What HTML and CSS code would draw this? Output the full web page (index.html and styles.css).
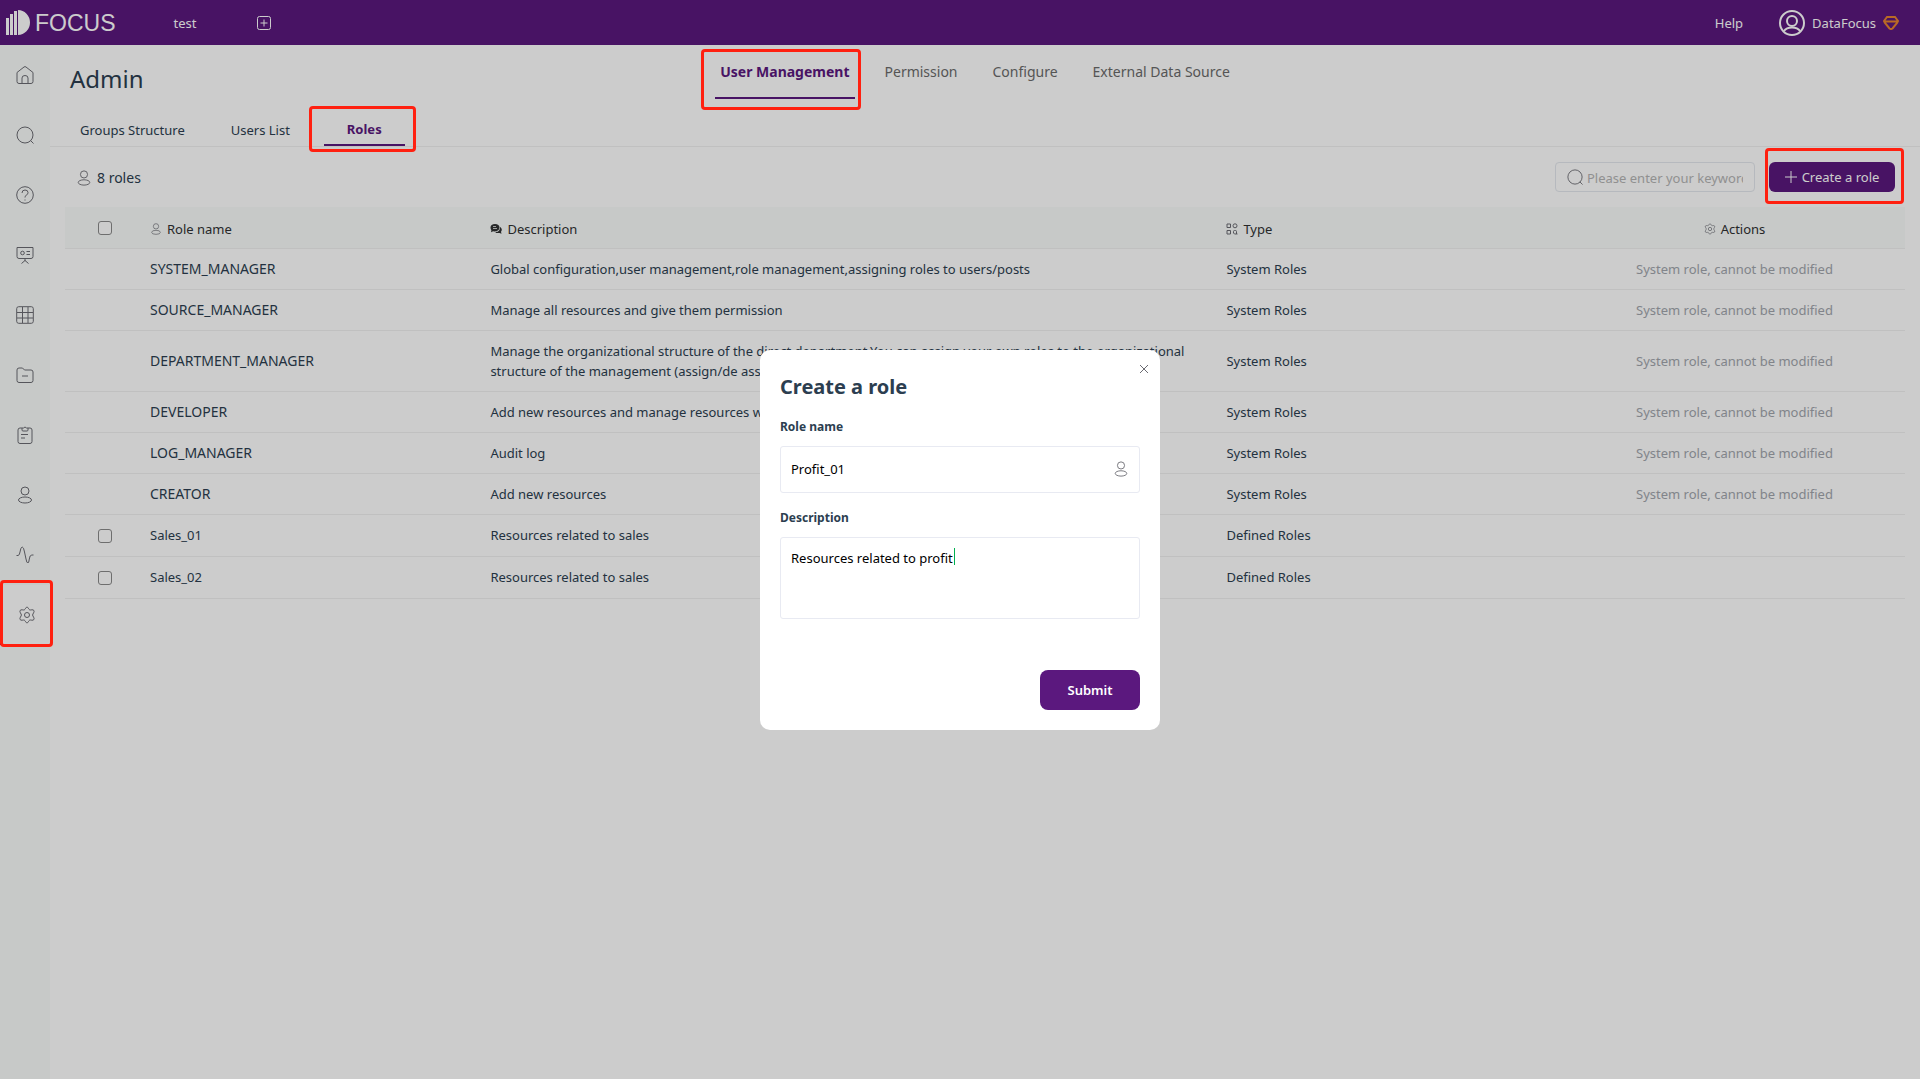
FILE: index.html
```html
<!DOCTYPE html>
<html lang="en">
<head>
<meta charset="utf-8">
<title>Admin - Roles</title>
<link rel="stylesheet" href="styles.css">
</head>
<body>
<svg class="sprite" aria-hidden="true">
  <symbol id="i-user" viewBox="0 0 18 18"><circle cx="9" cy="5" r="4"/><ellipse cx="9" cy="14" rx="6.500" ry="3"/></symbol>
  <symbol id="i-search" viewBox="0 0 18 18"><circle cx="9" cy="9" r="8"/><path d="M14.500 14.500l3 3"/></symbol>
  <symbol id="i-gear" viewBox="0 0 18 18"><path d="M9 1C10 1 10.700 3.400 11.700 3.900S15 3 15.900 4.500 14.600 7.800 14.600 9s2.200 3 1.300 4.500-3.200.1-4.200.6S10 17 9 17s-1.700-2.400-2.700-2.900S3 15 2.100 13.500 3.400 10.200 3.400 9 1.200 6 2.100 4.500s3.200-.1 4.200-.6S8 1 9 1z"/><circle cx="9" cy="9" r="2.500"/></symbol>
</svg>
<header class="topbar">
  <a class="logo" href="#" aria-label="Focus home">
    <svg width="24" height="26" viewBox="0 0 24 26"><path d="M0 8h3v17H0zM4 4h3v21H4zM8 1h3v24H8zM12 0a12 12.500 0 0 1 0 25z"/></svg>
    <span>FOCUS</span>
  </a>
  <a class="project" href="#">test</a>
  <button class="add" aria-label="Add project"><svg class="ico" width="14" height="14" viewBox="0 0 14 14"><rect x=".5" y=".5" width="13" height="13" rx="2"/><path d="M7 3.500v7M3.500 7h7"/></svg></button>
  <a class="help" href="#">Help</a>
  <a class="account" href="#">
    <svg class="ico avatar" width="26" height="26" viewBox="0 0 26 26"><circle cx="13" cy="13" r="12"/><circle cx="13" cy="11" r="5"/><path d="M5 21c2-3 5-3.500 8-3.500s6 .5 8 3.500"/></svg>
    <span>DataFocus</span>
    <svg class="ico gem" width="16" height="14" viewBox="0 0 16 14"><path d="M4 1h8l3 4-1 2-4.500 5.500q-1.500 1-3 0L2 7 1 5zM2 5.500h12"/></svg>
  </a>
</header>
<div class="shell">
  <nav class="side" aria-label="Main">
    <a href="#" aria-label="Home"><svg class="ico" width="18" height="18" viewBox="0 0 18 18"><path d="M1 6.500L8 1q1-.8 2 0l7 5.500v9q0 2-2 2H3q-2 0-2-2zM6 17v-5q0-2.500 3-2.500t3 2.500v5"/></svg></a>
    <a href="#" aria-label="Search"><svg class="ico" width="18" height="18"><use href="#i-search"/></svg></a>
    <a href="#" aria-label="Questions"><svg class="ico" width="18" height="18" viewBox="0 0 18 18"><circle cx="9" cy="9" r="8.300"/><path d="M6 7q0-3 3-3t3 2.500Q12 8 10.500 9 9 10 9 11.500M9 13.500v1"/></svg></a>
    <a href="#" aria-label="Boards"><svg class="ico" width="18" height="18" viewBox="0 0 18 18"><path d="M1 1.500h16v9q0 2-2 2H3q-2 0-2-2zM9 12.500V15M5.500 17.500L9 14.500l3.500 3M10.500 5.500H14M10.500 8.500H14"/><circle cx="6.500" cy="7" r="1.800"/></svg></a>
    <a href="#" aria-label="Tables"><svg class="ico" width="18" height="18" viewBox="0 0 18 18"><rect x=".7" y=".7" width="16.600" height="16.600" rx="2"/><path d="M1 6.500h16M1 12h16M6.500 1v16M12 1v16"/></svg></a>
    <a href="#" aria-label="Resources"><svg class="ico" width="18" height="18" viewBox="0 0 18 18"><path d="M1 4q0-2 2-2h3.500l2 2H15q2 0 2 2v8.500q0 2-2 2H3q-2 0-2-2zM6 10h6"/></svg></a>
    <a href="#" aria-label="Tasks"><svg class="ico" width="18" height="18" viewBox="0 0 18 18"><path d="M6 2H4Q2 2 2 4v11.500q0 2 2 2h10q2 0 2-2V4q0-2-2-2h-2M5 8.500h7M5 12h4"/><path d="M6 2h1.500q1.500-2 3 0H12v2q0 1-1 1H7q-1 0-1-1z"/></svg></a>
    <a href="#" aria-label="Users"><svg class="ico" width="18" height="18"><use href="#i-user"/></svg></a>
    <a href="#" aria-label="Monitor"><svg class="ico" width="18" height="18" viewBox="0 0 18 18"><path d="M.5 9.500H2Q3.500 9.500 4 6 4.700 1 6.200 1T8.500 6l1.500 7q.7 4 1.800 4t1.500-4q.4-4 2.500-4h1.700"/></svg></a>
    <a href="#" aria-label="Admin" aria-current="page" class="marked mark-side"><svg class="ico" width="18" height="18"><use href="#i-gear"/></svg></a>
  </nav>
  <main class="content">
    <div class="head">
      <h1>Admin</h1>
      <nav class="tabs" aria-label="Admin sections">
        <a href="#" aria-current="page" class="marked mark-tab">User Management</a>
        <a href="#">Permission</a>
        <a href="#">Configure</a>
        <a href="#">External Data Source</a>
      </nav>
    </div>
    <nav class="subtabs" aria-label="User management">
      <a href="#">Groups Structure</a>
      <a href="#">Users List</a>
      <a href="#" aria-current="page" class="marked mark-subtab">Roles</a>
    </nav>
    <div class="toolbar">
      <div class="count"><svg class="ico" width="16" height="16"><use href="#i-user"/></svg><span>8 roles</span></div>
      <label class="search"><svg class="ico" width="16" height="16"><use href="#i-search"/></svg><input type="text" aria-label="Keyword" placeholder="Please enter your keyword"></label>
      <button class="create marked mark-create"><svg class="ico" width="12" height="12" viewBox="0 0 12 12"><path d="M6 0v12M0 6h12"/></svg>Create a role</button>
    </div>
    <table class="roles">
      <colgroup><col class="c-check"><col class="c-name"><col class="c-desc"><col class="c-type"><col></colgroup>
      <thead>
        <tr>
          <th class="check"><input type="checkbox" aria-label="Select all roles"></th>
          <th><span class="th"><svg class="ico" width="12" height="12"><use href="#i-user"/></svg>Role name</span></th>
          <th><span class="th"><svg class="bubble" width="12" height="12" viewBox="0 0 12 12"><path fill-rule="evenodd" d="M5 1c2.800 0 4.500 1.400 4.500 3.600S7.800 8.500 5 8.500c-.7 0-1.300 0-1.900-.3L1 9.200l.4-2C.8 6.500.5 5.700.5 4.600.5 2.400 2.200 1 5 1zM3 3.200v.8h3v-.8zm0 2v.8h4v-.8z"/><path d="M10 4c1.200.6 1.800 1.500 1.800 2.800 0 .8-.3 1.500-.8 2l.5 2-2-.9C7.500 10.300 6 10 5.200 9.200 8 9.200 10.200 7.500 10 4z"/></svg>Description</span></th>
          <th><span class="th"><svg class="ico" width="12" height="12" viewBox="0 0 12 12"><path d="M1 1h3.500v3.500H1zM1 7.500h3.500V11H1z"/><circle cx="9" cy="2.800" r="2"/><path d="M7.500 10V8.500q0-1 1-1h1q1 0 1 1V11h-2zM10.500 11h1"/></svg>Type</span></th>
          <th class="act"><span class="th"><svg class="ico" width="12" height="12"><use href="#i-gear"/></svg>Actions</span></th>
        </tr>
      </thead>
      <tbody>
        <tr><td></td><td class="name">SYSTEM_MANAGER</td><td>Global configuration,user management,role management,assigning roles to users/posts</td><td>System Roles</td><td class="act">System role, cannot be modified</td></tr>
        <tr><td></td><td class="name">SOURCE_MANAGER</td><td>Manage all resources and give them permission</td><td>System Roles</td><td class="act">System role, cannot be modified</td></tr>
        <tr><td></td><td class="name">DEPARTMENT_MANAGER</td><td>Manage the organizational structure of the direct department.You can assign your own roles to the organizational structure of the management (assign/de assign)</td><td>System Roles</td><td class="act">System role, cannot be modified</td></tr>
        <tr><td></td><td class="name">DEVELOPER</td><td>Add new resources and manage resources with permission</td><td>System Roles</td><td class="act">System role, cannot be modified</td></tr>
        <tr><td></td><td class="name">LOG_MANAGER</td><td>Audit log</td><td>System Roles</td><td class="act">System role, cannot be modified</td></tr>
        <tr><td></td><td class="name">CREATOR</td><td>Add new resources</td><td>System Roles</td><td class="act">System role, cannot be modified</td></tr>
        <tr class="custom"><td class="check"><input type="checkbox" aria-label="Select Sales_01"></td><td>Sales_01</td><td>Resources related to sales</td><td>Defined Roles</td><td></td></tr>
        <tr class="custom"><td class="check"><input type="checkbox" aria-label="Select Sales_02"></td><td>Sales_02</td><td>Resources related to sales</td><td>Defined Roles</td><td></td></tr>
      </tbody>
    </table>
  </main>
</div>
<div class="overlay">
  <form class="modal" role="dialog" aria-modal="true" aria-labelledby="modal-title">
    <button type="button" class="close" aria-label="Close"><svg class="ico" width="8" height="8" viewBox="0 0 8 8"><path d="M0 0l8 8M8 0L0 8"/></svg></button>
    <h2 id="modal-title">Create a role</h2>
    <label for="role-name">Role name</label>
    <div class="field">
      <input id="role-name" type="text" value="Profit_01">
      <svg class="ico" width="16" height="16"><use href="#i-user"/></svg>
    </div>
    <label for="role-desc">Description</label>
    <div class="field area">
      <textarea id="role-desc">Resources related to profit</textarea>
      <span class="caret"></span>
    </div>
    <button type="submit" class="submit">Submit</button>
  </form>
</div>
</body>
</html>
```

FILE: styles.css
```css
* { box-sizing: border-box; }

body {
  margin: 0;
  min-height: 100vh;
  display: flex;
  flex-direction: column;
  background: #fff;
  color: #2c3e50;
  font: 13px/20px "Noto Sans", "Open Sans", sans-serif;
}

a { color: inherit; text-decoration: none; }
button, input, textarea { font: inherit; color: inherit; margin: 0; }
button { border: 0; background: none; padding: 0; }
h1, h2 { margin: 0; }

.sprite { position: absolute; width: 0; height: 0; }
.ico { fill: none; stroke: #6b6b72; stroke-width: 1; flex: none; }

/* Top bar */
.topbar {
  display: flex;
  align-items: center;
  height: 45px;
  padding: 0 21px 0 6px;
  background: #5b187e;
  color: #fff;
}
.topbar .ico { stroke: #fff; }
.logo { display: flex; align-items: center; gap: 5px; font: 23px/26px "Liberation Sans", sans-serif; }
.logo svg { fill: #fff; }
.project { margin-left: 58px; }
.add { margin-left: 61px; display: flex; }
.help { margin-left: auto; }
.account { margin-left: 36px; display: flex; align-items: center; gap: 7px; }
.avatar { stroke-width: 2; }
.topbar .gem { stroke: #e8842f; stroke-width: 2; }

/* Sidebar */
.shell { flex: 1; display: flex; }
.side { flex: none; width: 50px; background: #f9fcfb; }
.side a { display: flex; align-items: center; justify-content: center; height: 60px; }
.side a[aria-current] { background: #fff; border-left: 3px solid #5b187e; }

/* Section heading and tabs */
.content { flex: 1; min-width: 0; }
.head {
  display: grid;
  grid-template-columns: 1fr auto 1fr;
  height: 66px;
  padding: 0 40px 0 20px;
}
.head h1 { font-size: 24px; line-height: 32px; font-weight: 400; padding-top: 18px; }
.tabs { display: flex; align-self: start; gap: 25px; color: #6b6b6b; font-size: 14px; }
.tabs a { padding: 17px 5px 15px; border-bottom: 2px solid transparent; }
.tabs a[aria-current], .subtabs a[aria-current] { color: #5b187e; font-weight: 700; border-color: #5b187e; }

.subtabs { display: flex; height: 36px; padding: 0 7px; border-bottom: 1px solid #f0f0f0; }
.subtabs a { padding: 9px 23px 6px; border-bottom: 2px solid transparent; }
.subtabs a[aria-current] { margin-left: 11px; padding-top: 8px; }

/* Toolbar */
.toolbar { display: flex; align-items: center; height: 60px; padding: 0 25px 0 26px; }
.count { display: flex; align-items: center; gap: 5px; padding-top: 1px; font-size: 14px; }
.search {
  margin-left: auto;
  display: flex;
  align-items: center;
  gap: 4px;
  width: 200px;
  height: 30px;
  padding: 0 11px;
  border: 1px solid #e4e8ee;
  border-radius: 4px;
}
.search input { flex: 1; min-width: 0; padding: 1px 0 0; border: 0; outline: 0; background: none; }
.search input::placeholder { color: #b5b5b5; }
.create {
  display: flex;
  align-items: center;
  justify-content: center;
  gap: 5px;
  width: 126px;
  height: 30px;
  margin-left: 14px;
  border-radius: 6px;
  background: #5b187e;
  color: #fff;
}
.create .ico { stroke: #fff; }

/* Roles table */
.roles { width: calc(100% - 30px); margin: 0 15px; border-collapse: separate; border-spacing: 0; table-layout: fixed; }
.c-check { width: 75px; }
.c-name { width: 18.5%; }
.c-desc { width: 40%; }
.c-type { width: 19%; }
.roles th, .roles td { padding: 10px; border-bottom: 1px solid #f0f0f0; text-align: left; font-weight: 400; }
.roles th { background: #f9fcfb; color: #303133; padding: 12px 10px 9px; }
.roles .name { font-size: 14px; }
.roles .custom td { padding-bottom: 11px; }
.roles tr .check { padding: 1px 0 0 33px; }
.roles .custom .check { padding: 1px 0 0 33px; }
.roles .act { padding-right: 12px; text-align: center; color: #a2a6ad; }
.roles th.act { color: #303133; }
.roles input { appearance: none; display: block; width: 14px; height: 14px; border: 1px solid #8a8a8a; border-radius: 3px; background: #fff; }
.th { display: flex; align-items: center; gap: 5px; }
.act .th { justify-content: center; }
.bubble { fill: #303133; }

/* Dialog */
.overlay {
  position: fixed;
  inset: 0;
  z-index: 10;
  display: flex;
  align-items: center;
  justify-content: center;
  background: rgba(0, 0, 0, .2);
}
.modal {
  position: relative;
  display: flex;
  flex-direction: column;
  width: 400px;
  padding: 20px;
  border-radius: 10px;
  background: #fff;
}
.modal h2 { margin-bottom: 14px; font-size: 20px; line-height: 34px; }
.modal label { margin-bottom: 10px; font-size: 12px; line-height: 18px; font-weight: 700; }
.close { position: absolute; top: 15px; right: 12px; display: flex; }
.field { position: relative; display: flex; align-items: center; height: 47px; margin-bottom: 16px; padding: 0 10px; border: 1px solid #e8eaf2; border-radius: 3px; color: #000; }
.field input, .field textarea { flex: 1; min-width: 0; padding: 0; border: 0; outline: 0; background: none; resize: none; }
.area { height: 82px; margin-bottom: 51px; padding: 10px; }
.area textarea { height: 60px; }
.caret { position: absolute; left: 173px; top: 10px; width: 1px; height: 17px; background: #00b050; }
.submit { align-self: flex-end; width: 100px; height: 40px; border-radius: 8px; background: #5b187e; color: #fff; font-weight: 600; }

/* Red callout frames, drawn above the dimmed page */
.marked { position: relative; }
.marked::after { content: ""; position: absolute; z-index: 20; border: 3px solid #ff2010; border-radius: 4px; pointer-events: none; }
.mark-side::after { inset: -5px -3px -2px -3px; }
.mark-tab::after { inset: 4px -6px -13px -14px; }
.mark-subtab::after { inset: -5px -11px -8px -15px; }
.mark-create::after { inset: -14px -9px -12px -4px; }
```
